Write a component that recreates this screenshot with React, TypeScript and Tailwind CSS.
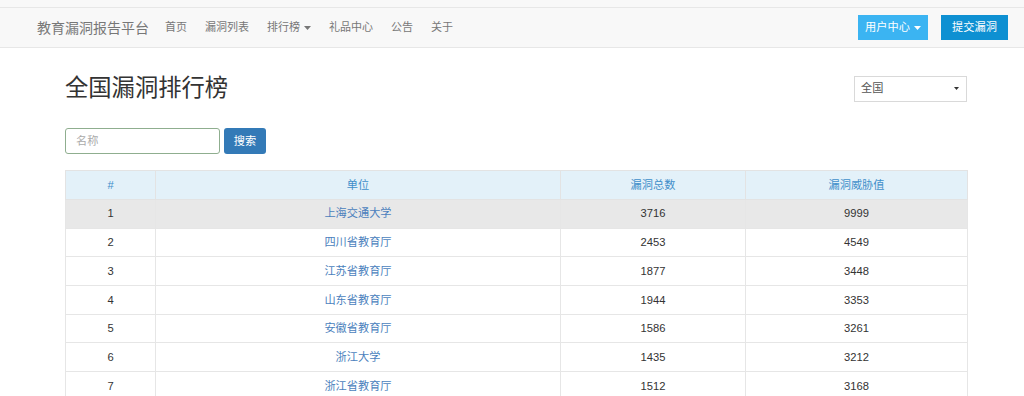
import React from "react";

const rows = [
  ["1", "上海交通大学", "3716", "9999"],
  ["2", "四川省教育厅", "2453", "4549"],
  ["3", "江苏省教育厅", "1877", "3448"],
  ["4", "山东省教育厅", "1944", "3353"],
  ["5", "安徽省教育厅", "1586", "3261"],
  ["6", "浙江大学", "1435", "3212"],
  ["7", "浙江省教育厅", "1512", "3168"],
];

function Caret({ className = "" }: { className?: string }) {
  return (
    <svg width="7" height="4" viewBox="0 0 7 4" className={className}>
      <path d="M0 0 L7 0 L3.5 4 Z" fill="currentColor" />
    </svg>
  );
}

export default function App() {
  return (
    <div
      className="w-[1024px] h-[396px] overflow-hidden bg-white text-[#333]"
      style={{ fontFamily: '"Liberation Sans", "Noto Sans CJK SC", sans-serif' }}
    >
      <div className="h-[7px] bg-[#f8f8f8]" />
      <nav className="h-[41px] bg-[#f8f8f8] border-y border-[#e7e7e7] flex items-center pl-[37px] pr-[16px]">
        <span className="text-[14px] text-[#777] mr-[16px] leading-none">教育漏洞报告平台</span>
        <div className="flex items-center gap-[18px] text-[11px] text-[#777]">
          <span>首页</span>
          <span>漏洞列表</span>
          <span className="flex items-center gap-[4px]">
            排行榜
            <Caret />
          </span>
          <span>礼品中心</span>
          <span>公告</span>
          <span>关于</span>
        </div>
        <div className="ml-auto flex items-center gap-[13px] text-[11.2px] text-white">
          <span className="h-[25px] w-[70px] bg-[#3bb4f2] flex items-center justify-center gap-[4px]">
            用户中心
            <Caret />
          </span>
          <span className="h-[25px] w-[67px] bg-[#0e90d2] flex items-center justify-center">提交漏洞</span>
        </div>
      </nav>

      <div className="ml-[65px] w-[902px]">
        <div className="flex items-center justify-between mt-[27px] h-[27px]">
          <h1 className="text-[23.3px] leading-none text-[#333]">全国漏洞排行榜</h1>
          <div className="w-[113px] h-[26px] border border-[#d9d9d9] flex items-center justify-between pl-[6px] pr-[7px] text-[11.2px] text-[#555]">
            <span>全国</span>
            <svg width="5" height="3" viewBox="0 0 5 3" className="text-[#333]">
              <path d="M0 0 L5 0 L2.5 3 Z" fill="currentColor" />
            </svg>
          </div>
        </div>

        <div className="flex items-center gap-[4px] mt-[26px]">
          <div className="w-[155px] h-[26px] border border-[#8fae8f] rounded-[3px] flex items-center pl-[10px] text-[11.2px] text-[#aaa]">
            名称
          </div>
          <div className="w-[42px] h-[26px] bg-[#337ab7] rounded-[3px] flex items-center justify-center text-[11.2px] text-white">
            搜索
          </div>
        </div>

        <table className="mt-[16px] w-[902px] border-collapse table-fixed text-[11.2px] text-center">
          <colgroup>
            <col className="w-[90px]" />
            <col className="w-[405px]" />
            <col className="w-[185px]" />
            <col className="w-[222px]" />
          </colgroup>
          <thead>
            <tr className="h-[29px] bg-[#e3f1f9] text-[#3f8fca]">
              <th className="border border-[#e3e3e3] font-normal">#</th>
              <th className="border border-[#e3e3e3] font-normal">单位</th>
              <th className="border border-[#e3e3e3] font-normal">漏洞总数</th>
              <th className="border border-[#e3e3e3] font-normal">漏洞威胁值</th>
            </tr>
          </thead>
          <tbody>
            {rows.map((r, i) => (
              <tr key={r[0]} className={`h-[28.7px] ${i === 0 ? "bg-[#e8e8e8]" : "bg-white"}`}>
                <td className="border border-[#e6e6e6] text-[#333]">{r[0]}</td>
                <td className="border border-[#e6e6e6] text-[#4b7fbd]">{r[1]}</td>
                <td className="border border-[#e6e6e6] text-[#333]">{r[2]}</td>
                <td className="border border-[#e6e6e6] text-[#333]">{r[3]}</td>
              </tr>
            ))}
          </tbody>
        </table>
      </div>
    </div>
  );
}
